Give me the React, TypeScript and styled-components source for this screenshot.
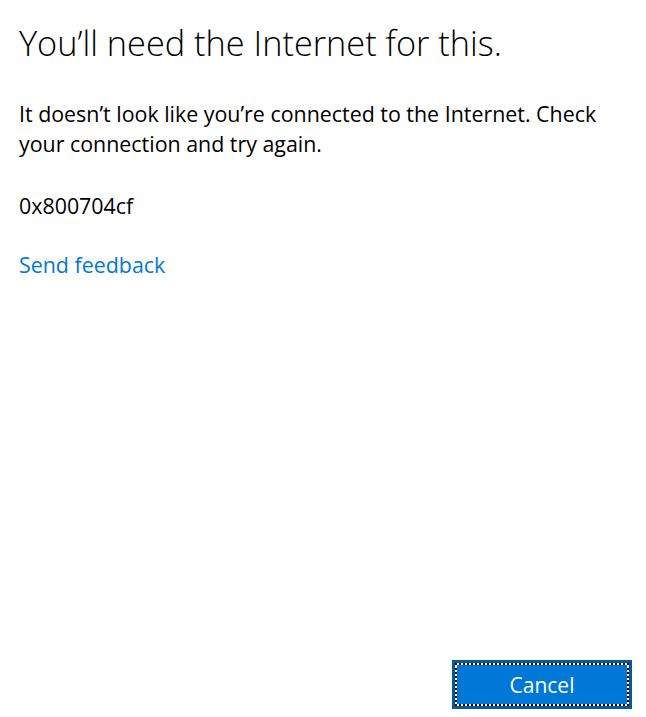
import React, { FC } from 'react';
import styled, { createGlobalStyle } from 'styled-components';

const GlobalStyle = createGlobalStyle`
  html, body {
    margin: 0;
    padding: 0;
    background: #ffffff;
  }
  body {
    font-family: 'Open Sans', 'Noto Sans', 'Liberation Sans', sans-serif;
    color: #000000;
  }
`;

const DialogSC = styled.div`
  box-sizing: border-box;
  display: flex;
  flex-direction: column;
  height: 100vh;
  padding: 0 14px 8px 19px;
`;

const ContentSC = styled.div`
  flex: 1;
`;

const TitleSC = styled.h1`
  margin: 19px 0 0;
  font-size: 34.3px;
  font-weight: 300;
  line-height: 48px;
`;

const TextSC = styled.p`
  margin: 0;
  font-size: 21.4px;
  line-height: 30px;
`;

const BodyTextSC = styled(TextSC)`
  margin-top: 32px;
  max-width: 610px;
`;

const CodeSC = styled(TextSC)`
  margin-top: 32px;
`;

const LinkSC = styled.a`
  display: inline-block;
  margin-top: 29px;
  font-size: 21.4px;
  line-height: 30px;
  color: #0078d7;
  text-decoration: none;
  cursor: pointer;
`;

const FooterSC = styled.div`
  display: flex;
  justify-content: flex-end;
`;

const ButtonSC = styled.button`
  box-sizing: border-box;
  width: 180px;
  height: 49px;
  padding: 0;
  border: 3px solid #005a9e;
  background: #0078d7;
  cursor: pointer;
`;

const FocusRingSC = styled.span`
  box-sizing: border-box;
  display: flex;
  align-items: center;
  justify-content: center;
  width: 100%;
  height: 100%;
  border: 2px dotted #000000;
  background: linear-gradient(#0078d7, #0078d7) padding-box, #ffffff border-box;
  color: #ffffff;
  font-family: 'Open Sans', 'Noto Sans', 'Liberation Sans', sans-serif;
  font-size: 21px;
`;

const App: FC = () => (
  <>
    <GlobalStyle />
    <DialogSC>
      <ContentSC>
        <TitleSC>You’ll need the Internet for this.</TitleSC>
        <BodyTextSC>
          It doesn’t look like you’re connected to the Internet. Check your
          connection and try again.
        </BodyTextSC>
        <CodeSC>0x800704cf</CodeSC>
        <LinkSC>Send feedback</LinkSC>
      </ContentSC>
      <FooterSC>
        <ButtonSC type="button">
          <FocusRingSC>Cancel</FocusRingSC>
        </ButtonSC>
      </FooterSC>
    </DialogSC>
  </>
);

export default App;
